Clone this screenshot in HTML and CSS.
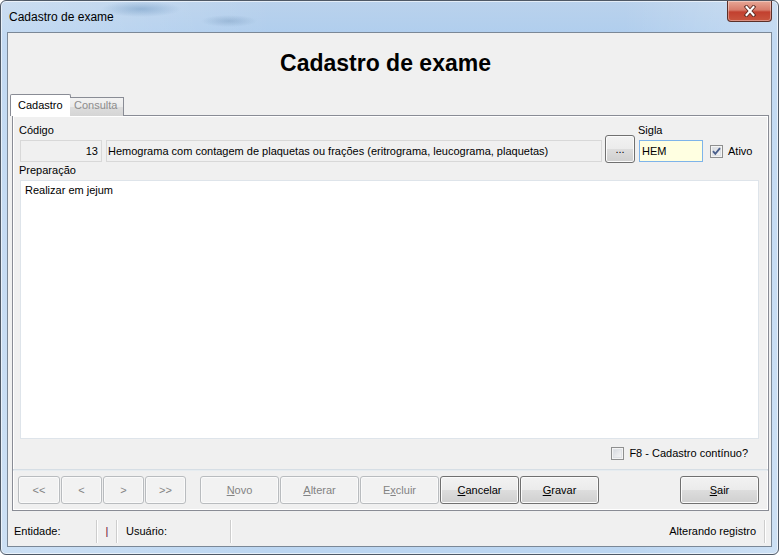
FILE: index.html
```html
<!DOCTYPE html>
<html lang="pt-BR">
<head>
<meta charset="utf-8">
<title>Cadastro de exame</title>
<link rel="stylesheet" href="styles.css">
</head>
<body>
<div class="window">
  <div class="titlebar">
    <span class="title">Cadastro de exame</span>
    <span class="close">
      <svg width="14" height="12" viewBox="0 0 14 12">
        <path d="M3.5 2 L10.5 10 M10.5 2 L3.5 10" stroke="#5a2a22" stroke-width="3.8" stroke-linecap="square" fill="none"/>
        <path d="M3.5 2 L10.5 10 M10.5 2 L3.5 10" stroke="#ffffff" stroke-width="2" stroke-linecap="square" fill="none"/>
      </svg>
    </span>
  </div>
  <div class="client">
    <div class="header">Cadastro de exame</div>
    <div class="tabs">
      <div class="tab active">Cadastro</div>
      <div class="tab inactive">Consulta</div>
    </div>
    <div class="panel">
      <div class="fields">
        <div class="field">
          <div class="lbl">Código</div>
          <div class="edit ro code">13</div>
        </div>
        <div class="edit ro desc">Hemograma com contagem de plaquetas ou frações (eritrograma, leucograma, plaquetas)</div>
        <div class="btn dots">...</div>
        <div class="field">
          <div class="lbl">Sigla</div>
          <div class="edit sigla">HEM</div>
        </div>
        <div class="check ativo">
          <span class="box">
            <svg width="11" height="11" viewBox="0 0 11 11"><path d="M2 5.2 L4.3 7.8 L9 2.2" stroke="#4a5f8c" stroke-width="1.9" fill="none"/></svg>
          </span>
          <span>Ativo</span>
        </div>
      </div>
      <div class="lbl prep">Preparação</div>
      <div class="memo">Realizar em jejum</div>
      <div class="f8row">
        <div class="check">
          <span class="box"></span>
          <span>F8 - Cadastro contínuo?</span>
        </div>
      </div>
      <div class="sep"></div>
      <div class="buttons">
        <div class="nav">
          <div class="btn disabled">&lt;&lt;</div>
          <div class="btn disabled">&lt;</div>
          <div class="btn disabled">&gt;</div>
          <div class="btn disabled">&gt;&gt;</div>
        </div>
        <div class="actions">
          <div class="btn disabled"><u>N</u>ovo</div>
          <div class="btn disabled"><u>A</u>lterar</div>
          <div class="btn disabled">E<u>x</u>cluir</div>
          <div class="btn"><u>C</u>ancelar</div>
          <div class="btn"><u>G</u>ravar</div>
        </div>
        <div class="btn sair"><u>S</u>air</div>
      </div>
    </div>
    <div class="status">
      <div class="sp sp1">Entidade:</div>
      <div class="ssep"></div>
      <div class="sp sp2">|</div>
      <div class="ssep"></div>
      <div class="sp sp3">Usuário:</div>
      <div class="ssep"></div>
      <div class="sp sp4">Alterando registro</div>
      <div class="ssep"></div>
    </div>
  </div>
</div>
</body>
</html>
```

FILE: styles.css
```css
body {
  margin: 0;
  background: #ffffff;
  font-family: "Liberation Sans", Arial, sans-serif;
  font-size: 11px;
  color: #000;
}

.window {
  width: 779px;
  height: 555px;
  box-sizing: border-box;
  border: 1px solid #4f5966;
  border-radius: 6px;
  padding: 0 6px 7px 6px;
  display: flex;
  flex-direction: column;
  background:
    radial-gradient(ellipse 40px 8px at 140px 8px, rgba(70,120,170,0.35), rgba(70,120,170,0) 100%),
    radial-gradient(ellipse 28px 6px at 228px 20px, rgba(70,110,150,0.25), rgba(70,110,150,0) 100%),
    linear-gradient(90deg, rgba(255,255,255,0.25) 0%, rgba(255,255,255,0) 35%, rgba(255,255,255,0) 80%, rgba(255,255,255,0.25) 100%),
    linear-gradient(180deg, #bad2ec 0%, #aecdee 40px, #bcd6f1 100%);
  box-shadow: inset 0 0 0 1px rgba(255,255,255,0.6);
}

.titlebar {
  height: 31px;
  display: flex;
  justify-content: space-between;
  align-items: flex-start;
}

.title {
  padding: 9px 0 0 2px;
  font-size: 12px;
  line-height: 14px;
  color: #000;
}

.close {
  width: 45px;
  height: 21px;
  box-sizing: border-box;
  border: 1px solid #5b2f28;
  border-top: none;
  border-radius: 0 0 4px 4px;
  background: linear-gradient(180deg, #e7a796 0%, #d77c6b 45%, #c2402f 55%, #c9563f 100%);
  box-shadow: inset 0 0 0 1px rgba(255,255,255,0.35);
  display: flex;
  align-items: center;
  justify-content: center;
}

.client {
  flex: 1;
  box-sizing: border-box;
  border: 1px solid #7b8897;
  background: #f0f0f0;
  display: flex;
  flex-direction: column;
}

.header {
  height: 61px;
  display: flex;
  align-items: center;
  justify-content: center;
  padding-right: 8px;
  font-weight: bold;
  font-size: 23px;
}

.tabs {
  height: 22px;
  display: flex;
  align-items: flex-end;
  padding-left: 2px;
  position: relative;
  z-index: 1;
}

.tab {
  box-sizing: border-box;
  border: 1px solid #898c95;
  border-bottom: none;
  line-height: 13px;
}

.tab.active {
  width: 61px;
  height: 22px;
  padding: 4px 0 0 7px;
  background: #ffffff;
  border-radius: 2px 2px 0 0;
}

.tab.inactive {
  width: 54px;
  height: 19px;
  margin-left: -1px;
  padding: 1px 0 0 4px;
  color: #8d8d8d;
  background: linear-gradient(180deg, #f2f2f2 0%, #ebebeb 50%, #dddddd 50%, #d5d5d5 100%);
  border-left: none;
}

.panel {
  margin: -1px 2px 0 4px;
  height: 396px;
  box-sizing: border-box;
  border: 1px solid #898c95;
  box-shadow: inset 0 0 0 1px #ffffff;
  padding: 8px 0 6px 0;
  display: flex;
  flex-direction: column;
}

.fields {
  display: flex;
  align-items: flex-end;
  padding-left: 7px;
}

.field {
  display: flex;
  flex-direction: column;
}

.lbl {
  line-height: 13px;
  margin-left: -1px;
  margin-bottom: 3px;
}

.edit {
  box-sizing: border-box;
  height: 22px;
  border: 1px solid #d8d8d8;
  display: flex;
  align-items: center;
  line-height: 13px;
  white-space: nowrap;
  overflow: hidden;
}

.edit.ro {
  background: #f0f0f0;
}

.code {
  width: 82px;
  justify-content: flex-end;
  padding-right: 3px;
  margin-right: 4px;
}

.desc {
  width: 496px;
  padding-left: 1px;
  margin-right: 3px;
}

.dots {
  width: 30px;
  height: 24px;
  margin-right: 4px;
  margin-bottom: -1px;
}

.sigla {
  width: 64px;
  background: #ffffe1;
  border-color: #7eb4ea;
  padding-left: 2px;
  margin-right: 7px;
}

.check {
  display: flex;
  align-items: center;
  gap: 5px;
  line-height: 13px;
}

.ativo {
  height: 22px;
}

.box {
  width: 13px;
  height: 13px;
  box-sizing: border-box;
  border: 1px solid #8e8f8f;
  background: linear-gradient(135deg, #cfd3d9 0%, #e9eaec 55%, #f7f7f7 100%);
  box-shadow: inset 0 0 0 1px #f4f4f4, inset 0 0 0 2px #dfe2e6;
  display: flex;
  align-items: center;
  justify-content: center;
}

.prep {
  margin: 2px 0 3px 6px;
}

.memo {
  height: 259px;
  box-sizing: border-box;
  margin: 0 9px 0 7px;
  border: 1px solid #dee4ea;
  background: #ffffff;
  padding: 3px 4px;
  line-height: 13px;
}

.f8row {
  margin-top: 8px;
  height: 13px;
  display: flex;
  justify-content: flex-end;
  padding-right: 20px;
}

.sep {
  margin-top: 9px;
  height: 2px;
  box-sizing: border-box;
  border-top: 1px solid #d6dee5;
  border-bottom: 1px solid #e6ecf0;
}

.buttons {
  margin-top: 5px;
  display: flex;
  padding: 0 9px 0 5px;
}

.nav {
  display: flex;
  gap: 1px;
}

.nav .btn {
  width: 41px;
}

.nav .btn:first-child {
  width: 42px;
}

.actions {
  display: flex;
  gap: 1px;
  margin-left: 14px;
}

.actions .btn {
  width: 79px;
}

.btn {
  box-sizing: border-box;
  height: 28px;
  border: 1px solid #707070;
  border-radius: 3px;
  background: linear-gradient(180deg, #f2f2f2 0%, #ebebeb 50%, #dddddd 50%, #cfcfcf 100%);
  box-shadow: inset 0 0 0 1px #fbfbfb;
  display: flex;
  align-items: center;
  justify-content: center;
  line-height: 13px;
}

.btn.disabled {
  border-color: #b9bcbf;
  background: #f2f2f2;
  box-shadow: inset 0 0 0 1px #fafafa;
  color: #838383;
}

.sair {
  width: 79px;
  margin-left: auto;
}

.status {
  height: 35px;
  box-sizing: border-box;
  padding: 5px 5px 0 0;
  display: flex;
  align-items: center;
  line-height: 13px;
}

.sp1 {
  width: 88px;
  padding-left: 6px;
  box-sizing: border-box;
}

.sp2 {
  width: 18px;
  text-align: center;
  color: #6a0a36;
}

.sp3 {
  width: 112px;
  padding-left: 8px;
  box-sizing: border-box;
}

.sp4 {
  flex: 1;
  text-align: right;
  padding-right: 8px;
}

.ssep {
  width: 1px;
  height: 23px;
  background: #cdcdcd;
  border-right: 1px solid #ffffff;
}
```
